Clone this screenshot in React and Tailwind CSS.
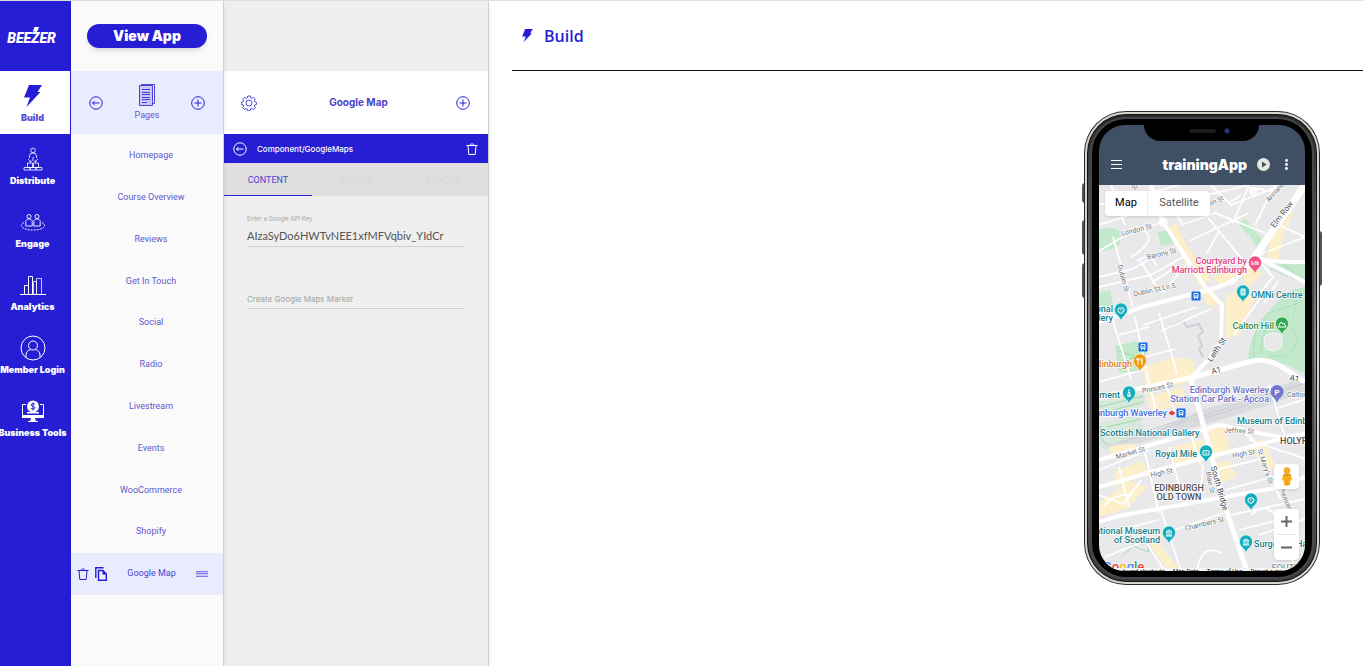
import React, { useState } from 'react';
import clsx from 'clsx';

function Bolt({ className }) {
  return (
    <svg className={className} viewBox="0 0 18 22" fill="currentColor" aria-hidden="true">
      <path d="M5 0H18L13.5 7H16.5L2.5 22L6 12.5H0Z" />
    </svg>
  );
}

function DistributeIcon() {
  return (
    <svg className="w-5 h-6" viewBox="0 0 20 24" fill="none" stroke="currentColor" strokeWidth="0.8">
      <circle cx="10" cy="3.5" r="2.3" />
      <path d="M6.5 11V9a3.5 3 0 0 1 7 0v2M10 10v4M5 12l3 3M15 12l-3 3M8 13.5v1.5H6.5M12 13.5v1.5h1.5" />
      <path d="M4.5 16h5v4.5h-5zM10.5 16h5v4.5h-5zM1 20.5h6v2.5H1zM7 20.5h6v2.5H7zM13 20.5h6v2.5h-6z" />
    </svg>
  );
}

function EngageIcon() {
  return (
    <svg className="w-[26px] h-5" viewBox="0 0 26 20" fill="none" stroke="currentColor" strokeWidth="0.9">
      <circle cx="9" cy="4.5" r="2" />
      <circle cx="17" cy="4.5" r="2" />
      <path d="M5.8 14V9.5C5.8 8 7.2 7 9 7s3.2 1 3.2 2.5V14zM13.8 14V9.5C13.8 8 15.2 7 17 7s3.2 1 3.2 2.5V14z" />
      <path strokeDasharray="2 1" d="M4 10.5C-1 13 1 18 13 18s14-5 9-7.5" />
    </svg>
  );
}

function AnalyticsIcon() {
  return (
    <svg className="w-[26px] h-5" viewBox="0 0 26 20" fill="none" stroke="currentColor">
      <path d="M0 19.5H26M4.5 19V10.5H8.5V19M8.5 19V1.5H12.5V19" />
      <path strokeOpacity="0.75" d="M13.5 19V6.5H16.5V19M16.5 19V3.5H21.5V19" />
    </svg>
  );
}

function MemberIcon() {
  return (
    <svg className="w-[26px] h-[26px]" viewBox="0 0 26 26" fill="none" stroke="currentColor">
      <circle cx="13" cy="13" r="12" />
      <circle cx="13" cy="10.5" r="4.5" />
      <path d="M6 22.5V20c0-3 2-5 4.5-5.3M20 22.5V20c0-3-2-5-4.5-5.3" />
    </svg>
  );
}

function ToolsIcon() {
  return (
    <svg className="w-6 h-[22px]" viewBox="0 0 24 22" fill="none" stroke="currentColor">
      <path d="M5 4.5H1.5V16M19 4.5h3.5V16" />
      <path fill="currentColor" stroke="none" d="M1 15h22v3H1zM10 18h4l1 3h2v1H7v-1h2z" />
      <circle cx="12" cy="6.5" r="6" fill="currentColor" stroke="none" />
      <path fill="currentColor" stroke="none" d="M6 12h12v1.500H6z" />
      <path stroke="#261ed4" d="M14 4.500c-.5-1-3.800-1.200-3.800.5 0 1.800 3.800 1 3.800 2.800 0 1.700-3.500 1.500-4 .3M12 2.500v8" />
    </svg>
  );
}

function PlusCircle() {
  return (
    <svg className="w-[14px] h-[14px]" viewBox="0 0 14 14" fill="none" stroke="currentColor">
      <circle cx="7" cy="7" r="6.3" />
      <path d="M7 3.500v7M3.500 7h7" />
    </svg>
  );
}

function BackCircle() {
  return (
    <svg className="w-[14px] h-[14px]" viewBox="0 0 14 14" fill="none" stroke="currentColor">
      <circle cx="7" cy="7" r="6.200" />
      <path d="M10.500 7h-7M5.500 5L3.500 7l2 2" />
    </svg>
  );
}

function TrashIcon() {
  return (
    <svg className="w-3 h-3" viewBox="0 0 12 12" fill="none" stroke="currentColor">
      <path d="M.5 2.500h11M4 2.500C4 .3 8 .3 8 2.500M2 2.500l.8 9h6.400l.8-9" />
    </svg>
  );
}

function CopyIcon() {
  return (
    <svg className="w-3 h-[14px]" viewBox="0 0 12 14" fill="none" stroke="currentColor" strokeWidth="1.4">
      <path d="M.8 11V.8H8.500M3.500 3.500H8L11.300 7v6.200H3.500z" />
      <path fill="currentColor" stroke="none" d="M7.500 3v4.500H12z" />
    </svg>
  );
}

function PagesIcon() {
  return (
    <svg className="w-4 h-[22px]" viewBox="0 0 16 22" fill="none" stroke="currentColor">
      <path strokeOpacity="0.8" d="M2.500 1.500V.5h13v19h-1.500" />
      <path fill="#c9c8f6" strokeOpacity="0.8" d="M.5 1.500h13v20H.5z" />
      <path strokeOpacity="0.8" d="M3 5.500h8M3 8.500h8M3 10.500h8M3 13.500h8M3 15.500h8M3 18.500h5" />
    </svg>
  );
}

function GearIcon() {
  return (
    <svg className="w-4 h-4" viewBox="0 0 24 24" fill="none" stroke="currentColor" strokeWidth="1.2">
      <circle cx="12" cy="12" r="4.5" />
      <path d="M10 1.500h4l.7 2.800 1.600.6 2.500-1.500 2.700 2.700-1.400 2.500.7 1.700 2.700.7v3l-2.700.8-.7 1.700 1.400 2.500-2.700 2.700-2.500-1.500-1.600.7-.7 2.700h-4l-.7-2.700-1.700-.7-2.500 1.500-2.700-2.700 1.500-2.500-.7-1.700-2.700-.8v-3l2.700-.7.7-1.700-1.500-2.500 2.700-2.700 2.500 1.500 1.700-.6z" />
    </svg>
  );
}

const NAV = [
  { label: 'Build', icon: <Bolt className="w-[18px] h-[22px]" /> },
  { label: 'Distribute', icon: <DistributeIcon /> },
  { label: 'Engage', icon: <EngageIcon /> },
  { label: 'Analytics', icon: <AnalyticsIcon /> },
  { label: 'Member Login', icon: <MemberIcon /> },
  { label: 'Business Tools', icon: <ToolsIcon /> },
];

const PAGES = [
  'Homepage', 'Course Overview', 'Reviews', 'Get In Touch', 'Social',
  'Radio', 'Livestream', 'Events', 'WooCommerce', 'Shopify',
];

const TABS = ['CONTENT', 'DESIGN', 'LAYOUT'];

function Sidebar() {
  return (
    <nav className="w-[71px] shrink-0 overflow-hidden bg-[#261ed4] text-white">
      <div className="relative flex h-[70px] items-center justify-center pr-2 pt-1">
        <span className="text-[14px] font-black italic font-[Roboto,sans-serif]">BEEZER</span>
        <Bolt className="absolute left-8 top-[26px] w-2 h-2" />
      </div>
      {NAV.map((item, i) => (
        <a
          key={item.label}
          href="#"
          className={clsx(
            'flex h-[63px] w-[70px] flex-col items-center pr-[5px] text-[9px] font-black',
            i === 0 && 'bg-white text-[#261ed4]'
          )}
        >
          <span className="flex h-[26px] mt-3 items-center justify-center">{item.icon}</span>
          <span className={clsx('mt-[3px] whitespace-nowrap leading-3', i === 0 && 'text-[#5750cf]')}>{item.label}</span>
        </a>
      ))}
    </nav>
  );
}

function PagesPanel() {
  return (
    <section className="z-10 w-[153px] shrink-0 border-r border-[#cfcfcf] bg-[#fafafa] text-[9px] text-[#5e59cf] shadow-md font-[Roboto,sans-serif]">
      <div className="flex h-[70px] items-center justify-center">
        <button className="h-6 w-[120px] rounded-full bg-[#261ed4] text-[14px] leading-6 font-black text-white shadow-md font-[Inter,sans-serif]">
          View App
        </button>
      </div>
      <div className="flex h-[63px] items-center justify-between bg-[#e9ecff] px-[18px] text-[#261ed4]">
        <button aria-label="Back"><BackCircle /></button>
        <div className="flex flex-col items-center">
          <PagesIcon />
          <span className="mt-[3px] leading-3 text-[#5e59cf]">Pages</span>
        </div>
        <button aria-label="Add page"><PlusCircle /></button>
      </div>
      <ul className="grid h-[419px] pl-2 pt-px text-center">
        {PAGES.map((page) => (
          <li key={page} className="flex items-center justify-center">
            <a href="#">{page}</a>
          </li>
        ))}
      </ul>
      <div className="flex h-[42px] items-center bg-[#e9ecff] pl-[6px] pr-[15px] text-[#261ed4]">
        <button aria-label="Delete page"><TrashIcon /></button>
        <button className="ml-[6px]" aria-label="Duplicate page"><CopyIcon /></button>
        <a href="#" className="flex-1 text-center text-[#4a44cf]">Google Map</a>
        <svg className="w-3 h-[6px] bg-[#c9c8f6]" viewBox="0 0 12 6" stroke="#7f7ae4" aria-hidden="true">
          <path d="M0 .5h12M0 2.500h12M0 5.500h12" />
        </svg>
      </div>
    </section>
  );
}

function EditorPanel() {
  const [apiKey, setApiKey] = useState('AIzaSyDo6HWTvNEE1xfMFVqbiv_YIdCr');
  const [tab, setTab] = useState('CONTENT');

  return (
    <section className="w-[265px] shrink-0 border-r border-[#cfcfcf] bg-[#efefef] shadow-md">
      <div className="mt-[70px] flex h-[63px] items-center justify-between bg-white pl-[17px] pr-[18px] text-[#261ed4]">
        <button aria-label="Settings"><GearIcon /></button>
        <h2 className="pl-1 text-[10px] font-bold text-[#4a44cf]">Google Map</h2>
        <button aria-label="Add component"><PlusCircle /></button>
      </div>
      <div className="flex h-[29px] items-center bg-[#261ed4] pl-[9px] pr-[10px] text-white">
        <button aria-label="Back to components"><BackCircle /></button>
        <span className="flex-1 pl-[10px] text-[8px] font-medium">Component/GoogleMaps</span>
        <button aria-label="Delete component"><TrashIcon /></button>
      </div>
      <div className="grid h-[33px] grid-cols-3 bg-[#e0dfde]">
        {TABS.map((name) => (
          <button
            key={name}
            onClick={() => setTab(name)}
            className={clsx(
              'border-b pt-[3px] text-[9px] font-[Roboto,sans-serif]',
              tab === name ? 'border-[#261ed4] text-[#4a44cf]' : 'border-transparent text-[#d6d6d6]'
            )}
          >
            {name}
          </button>
        ))}
      </div>
      <div className="px-[23px] pt-[18px]">
        <label htmlFor="api-key" className="block text-[6px] leading-[10px] text-[#a3a3a3]">Enter a Google API Key</label>
        <input
          id="api-key"
          value={apiKey}
          onChange={(e) => setApiKey(e.target.value)}
          className="block h-[23px] w-full border-b border-[#cfcfcf] bg-transparent pr-[15px] text-[11px] text-[#555] outline-none font-[Lato,sans-serif]"
        />
        <input
          aria-label="Create Google Maps Marker"
          placeholder="Create Google Maps Marker"
          className="mt-[42px] block h-5 w-full border-b border-[#cfcfcf] bg-transparent text-[8px] outline-none placeholder:text-[#a3a3a3]"
        />
      </div>
    </section>
  );
}

const TEAL = '#12808c';

// x, y is the baseline anchor, r the rotation in degrees
const STREETS = [
  { t: 'London St', x: 38, y: 47, r: -14 },
  { t: 'Barony St', x: 63, y: 71, r: -14 },
  { t: 'Dublin St', x: 22, y: 94, r: 75 },
  { t: 'Dublin St Ln S', x: 56, y: 107, r: -12 },
  { t: 'London St', x: 111, y: 21, r: -24 },
  { t: 'Annandale', x: 181, y: 5, r: -48 },
  { t: 'St', x: 34, y: 3, r: 50 },
  { t: 'Princes St', x: 59, y: 205, r: -13 },
  { t: 'Market St', x: 32, y: 270, r: -16 },
  { t: 'Jeffrey St', x: 140, y: 248, r: 2 },
  { t: 'High St', x: 145, y: 271, r: -10 },
  { t: 'High St', x: 63, y: 290, r: -12 },
  { t: "St Mary's St", x: 164, y: 282, r: 72 },
  { t: 'Blair St', x: 109, y: 298, r: 78 },
  { t: 'Chambers St', x: 106, y: 341, r: -14 },
  { t: 'Pleasance', x: 186, y: 318, r: 68 },
  { t: 'Calton', x: 198, y: 212, r: 0 },
];

const PLACES = [
  { t: 'Courtyard by', x: 148, y: 79, c: '#e0407b', a: 'end' },
  { t: 'Marriott Edinburgh', x: 148, y: 88, c: '#e0407b', a: 'end' },
  { t: 'OMNi Centre', x: 152, y: 113, c: TEAL, a: 'start' },
  { t: 'Calton Hill', x: 175, y: 144, c: '#2c8a47', a: 'end' },
  { t: 'National', x: 14, y: 127, c: TEAL, a: 'end' },
  { t: 'Gallery', x: 14, y: 136, c: TEAL, a: 'end' },
  { t: 'Edinburgh', x: 33, y: 182, c: '#e07b12', a: 'end' },
  { t: 'Monument', x: 21, y: 213, c: TEAL, a: 'end' },
  { t: 'Edinburgh Waverley', x: 170, y: 208, c: '#6a70c4', a: 'end' },
  { t: 'Station Car Park - Apcoa', x: 170, y: 217, c: '#6a70c4', a: 'end' },
  { t: 'Edinburgh Waverley', x: 68, y: 231, c: '#3f6fe0', a: 'end' },
  { t: 'Museum of Edinburgh', x: 138, y: 239, c: TEAL, a: 'start' },
  { t: 'Scottish National Gallery', x: 1, y: 251, c: TEAL, a: 'start' },
  { t: 'Royal Mile', x: 98, y: 272, c: TEAL, a: 'end' },
  { t: 'National Museum', x: 61, y: 349, c: TEAL, a: 'end' },
  { t: 'of Scotland', x: 61, y: 358, c: TEAL, a: 'end' },
  { t: "Surgeons' Halls", x: 155, y: 362, c: TEAL, a: 'start' },
];

const PINS = [
  { x: 156, y: 78, c: '#f0528a', g: 'M-3-2v4M-3 1h6v1M3 1V-1H-1' },
  { x: 144, y: 107, c: '#12aebd', g: 'M-2-3h4v6h-4zM-1-2h2v4h-2z' },
  { x: 183, y: 139, c: '#34a853', g: 'M-4 3l3-5 2 2 1-1 2 4z' },
  { x: 22, y: 125, c: '#12aebd', g: 'M-2-2a3 3 0 1 0 4 0zM-1 0h1M1 1h1' },
  { x: 41, y: 176, c: '#f29a0c', g: 'M-2-3v7M-3-3v2h2v-2M2 4v-7c-2 1-1 3 0 4' },
  { x: 30, y: 208, c: '#12aebd', g: 'M0-4v3l-1 1v3h2V0l-1-1M-2 3h4' },
  { x: 107, y: 267, c: '#12aebd', g: 'M-3-1h2l1-1 1 1h2v4h-6zM-1 1h2' },
  { x: 152, y: 315, c: '#12aebd', g: 'M-2-2a3 3 0 1 0 4 0zM-1 0h1M1 1h1' },
  { x: 70, y: 348, c: '#12aebd', g: 'M-3-1l3-2 3 2zM-2 0v3M0 0v3M2 0v3M-3 3h6' },
  { x: 147, y: 357, c: '#12aebd', g: 'M-3-1l3-2 3 2zM-2 0v3M0 0v3M2 0v3M-3 3h6' },
];

const STATIONS = [[97, 111], [44, 162], [82, 228]];

function CityMap() {
  return (
    <svg className="block w-full" viewBox="0 0 206 386" fontFamily="Roboto, sans-serif" role="img" aria-label="Map of Edinburgh">
      <rect width="206" height="386" fill="#e9e9eb" />

      {/* parks */}
      <g fill="#c3e9cc">
        <path d="M0 44L14 43Q23 46 22 54Q21 63 10 65L0 66zM58 47l11-2 6 14-13 2zM139 38l7-5 9 12-6 5zM150 50l6-5 7 10-5 7zM0 107l11-2 3 16-14 4zM24 26l8 4-5 4-6-5z" />
        <path d="M149 174L152 155 162 136 176 119 190 106 206 102V189L190 181 168 174zM167 77H206V99zM16 161L37 156 48 167 42 186 20 188z" />
        <path d="M0 216l45-8 1 12-46 13zM0 238l40-8 6 16L8 266 0 260z" opacity="0.5" />
      </g>
      <g fill="none" stroke="#8fd3a0" strokeWidth="0.8">
        <path d="M18 180L48 166M20 166l26 9M0 222l44-11M0 229l44-12M2 241q-4 20 18 21M8 242l34-8M28 352l6-12M30 345l4 16 16 6-4-16M34 361l-10 9" />
        <path strokeDasharray="2 1.5" d="M155 172q-2-40 20-46t28-10M162 168q0-28 16-30t20 18q-6 20-28 14M198 112l-4 20M171 84l30 12M185 79l15 14" />
      </g>
      <path d="M165 152q8-7 18-2v12q-9 7-17 1z" fill="#e8e8ea" stroke="#fff" strokeDasharray="2 1" />

      {/* commercial blocks */}
      <g fill="#fcefc9">
        <path d="M70 42l8-3 10 22 16 22 8 12-11 6-18-28zM172 50l14-22 9-3-10 24-6 26-11-3zM143 84l14-4 7 10-17 13zM113 92l22-7 8 4-20 12zM128 110l23-8 5 12-16 36-13 3-1-22zM102 107l12-3 6 12-4 7-9-5z" />
        <path d="M44 182l30-9 20 1 3 20-50 16zM49 212l34-10 3 8-35 12zM52 222l33-9 1 5-32 9zM104 243l20-6 8 30-18 8zM74 262l30-8 5 17-33 8zM16 286l28-10 5 12-32 14zM0 318l30-22 18 6-20 22-28 8zM114 280l16-5 7 16-15 8zM150 260l14-6 12 26-8 8zM54 350l13 18 14 16h-13l-16-22zM10 262l20-7 8 8-25 9z" />
      </g>

      {/* railway */}
      <path d="M0 262L60 244 100 226 170 204 206 192V206L170 220 104 240 40 258z" fill="#dadbdf" />
      <path d="M20 258L100 232 206 198M30 252l70-23M96 236l80-24" stroke="#cbcdd2" fill="none" />
      <path d="M74 140l10-4 4 6 12-3 4 8-5 4 4 9-3 4 4 8" fill="none" stroke="#cfd1d6" strokeWidth="2" />

      {/* minor roads */}
      <g fill="none" stroke="#fff" strokeWidth="1.8">
        <path d="M0 20L62 5 112-10M0 40L64 20 150 0M12 0l14 40M26 52q8-16 20-6t-14 26M0 92L34 84 64 66M14 52l20 70M40 74l22 34M64 37L30 48 0 66M38 76q14-10 20 6M64 108l26-32M74 84l-22 14M0 102l52-12 32-18" />
        <path d="M82 40l34-12 50 20M90 56l60-28M100 22l20 24-12 22M120 46l28 34M150 0l-16 38M112 0l20 20 46-18M130 18l12-8M152 8q6-8 14-2M176 0l-20 40M62 6l22 34M170 66l36-14M180 40l26 12M132 100l34-34M158 112l16-20-12-14M165 118l14-22M135 150l30-42" />
        <path d="M12 130l20 64M36 132l14 66M60 128l18 60M44 140l54-18M20 150l30-8M62 146l50-22M46 172l30-8M50 198l8 32M66 196l10 32M0 197l44-12M170 200l18 58M176 224l30-10" />
        <path d="M0 285l50-20M20 282l10 40M46 268l14 60M70 262l14 54M92 250l10 30M104 280l-3 36M0 350l60-15M62 325l20 61M76 345l48-17M98 386q4-28 24-18M130 245q24 2 30 20l22 50M150 255l60 20M116 285l50-12M126 305l52-14M132 330l74-16M152 330q16-16 28 6M160 350l46-16M140 345l36-9 20 46M6 372l40-16 20 30M0 310l24 9 18-24M4 322q14-16 30-11" />
      </g>

      {/* main roads */}
      <g fill="none" stroke="#fff" strokeLinejoin="round">
        <path strokeWidth="4" d="M0 137L43 122 116 103Q139 97 156 72M64 37L106 102 123 120 122 155 109 175 93 192M93 192L0 212M156 72Q170 78 206 77M162 74L206 97M64 37L52 0" />
        <path strokeWidth="7" d="M154 74L206 0" />
        <path strokeWidth="5" d="M92 193L149 177Q168 172 183 182T206 197M91 192L103 235 126 322 148 386" />
        <path strokeWidth="4" d="M0 337Q20 330 36 328L109 315 176 303 206 292M0 275L93 248 120 240 206 257M0 302L59 285 109 272 150 262 206 248" />
        <circle cx="64" cy="37" r="3" strokeWidth="3" />
        <circle cx="154" cy="6" r="3" strokeWidth="2" />
      </g>

      {/* labels */}
      <g stroke="#fff" strokeWidth="1.5" strokeLinejoin="round" paintOrder="stroke">
        <g fontSize="7" fill="#6b7076" textAnchor="middle">
          {STREETS.map((s, i) => (
            <text key={i} x={s.x} y={s.y} transform={`rotate(${s.r} ${s.x} ${s.y})`}>{s.t}</text>
          ))}
        </g>
        <g fontSize="8" fill="#45494f" textAnchor="middle">
          <text x="185" y="31" transform="rotate(-52 185 31)">Elm Row</text>
          <text x="120" y="166" transform="rotate(-56 120 166)">Leith St</text>
          <text x="118" y="188" transform="rotate(-16 118 188)">A1</text>
          <text x="195" y="196" transform="rotate(12 195 196)">A1</text>
          <text x="118" y="304" transform="rotate(74 118 304)">South Bridge</text>
        </g>
        <g fontSize="9" fontWeight="500">
          {PLACES.map((p) => (
            <text key={p.t + p.y} x={p.x} y={p.y} fill={p.c} textAnchor={p.a}>{p.t}</text>
          ))}
        </g>
        <g fontSize="9" fontWeight="500" fill="#4b5057">
          <text x="80" y="306" textAnchor="middle">EDINBURGH</text>
          <text x="80" y="315" textAnchor="middle">OLD TOWN</text>
          <text x="181" y="259">HOLYROOD</text>
          <text x="172" y="386" fill="#8b9096">SOUTHSIDE</text>
        </g>
      </g>

      {STATIONS.map(([x, y]) => (
        <g key={x} transform={`translate(${x} ${y})`}>
          <rect x="-4.5" y="-4.5" width="9" height="9" rx="1" fill="#1a6fe0" />
          <path d="M-2-2.5h4v4h-4zM-2 0h4M-2 3l1-1M2 3L1 2" fill="none" stroke="#fff" strokeWidth="0.9" />
        </g>
      ))}
      <path d="M70 228l3-2 3 2-3 2z" fill="#ec3b43" stroke="#ec3b43" />

      {PINS.map((p) => (
        <g key={`${p.x}-${p.y}`} transform={`translate(${p.x} ${p.y})`}>
          <path d="M0 11C-1 6-6.5 5-6.5-.5a6.5 6.5 0 0 1 13 0C6.5 5 1 6 0 11z" fill={p.c} stroke="#fff" strokeWidth="0.5" />
          <path d={p.g} fill="none" stroke="#fff" />
        </g>
      ))}
      <g transform="translate(178 207)">
        <path d="M0 11C-1 6-6.5 5-6.5-.5a6.5 6.5 0 0 1 13 0C6.5 5 1 6 0 11z" fill="#7177cf" />
        <text y="3" fontSize="8" fontWeight="700" fill="#fff" textAnchor="middle">P</text>
      </g>

      <text x="4" y="386" fontSize="13" fontWeight="500" stroke="#fff" strokeWidth="1" paintOrder="stroke">
        <tspan fill="#4285f4">G</tspan><tspan fill="#ea4335">o</tspan><tspan fill="#fbbc05">o</tspan><tspan fill="#4285f4">g</tspan><tspan fill="#34a853">l</tspan><tspan fill="#ea4335">e</tspan>
      </text>
    </svg>
  );
}

function PhoneScreen() {
  return (
    <div className="relative h-[446px] overflow-hidden rounded-[26px] bg-[#3f5065] font-[Roboto,sans-serif]">
      {/* notch */}
      <div className="absolute left-[45px] top-0 flex h-4 w-[115px] items-center justify-center gap-2 rounded-b-2xl bg-black pb-1">
        <span className="ml-4 h-1 w-[27px] rounded-full bg-[#1c1c1e]" />
        <span className="h-[6px] w-[6px] rounded-full border border-[#1a2130] bg-[#1b3c86]" />
      </div>

      <header className="flex h-[60px] items-center pl-3 pr-[17px] pt-[19px] text-white">
        <button aria-label="Menu">
          <svg className="w-[11px] h-[9px]" viewBox="0 0 11 9" stroke="currentColor">
            <path d="M0 .5h11M0 4.500h11M0 8.500h11" />
          </svg>
        </button>
        <h3 className="flex-1 text-right text-[14px] leading-5 font-black font-[Inter,sans-serif]">trainingApp</h3>
        <button className="ml-[10px]" aria-label="Play">
          <svg className="w-[13px] h-[13px]" viewBox="0 0 13 13">
            <circle cx="6.5" cy="6.5" r="6.5" fill="#e9e7df" />
            <path d="M5 3.500l4.500 3L5 9.500z" fill="#3f5065" />
          </svg>
        </button>
        <button className="ml-[15px]" aria-label="More">
          <svg className="w-[3px] h-[11px]" viewBox="0 0 3 11" fill="currentColor">
            <circle cx="1.5" cy="1.5" r="1.4" />
            <circle cx="1.5" cy="5.5" r="1.4" />
            <circle cx="1.5" cy="9.5" r="1.4" />
          </svg>
        </button>
      </header>

      <CityMap />

      {/* map controls */}
      <div className="absolute left-[6px] top-[66px] flex h-[25px] rounded-sm bg-white text-[11px] shadow-sm">
        <button className="w-[43px] border-r border-[#f0f0f0] text-black">Map</button>
        <button className="w-[62px] text-[#565656]">Satellite</button>
      </div>
      <button className="absolute right-[6px] top-[339px] flex h-[25px] w-[25px] items-center justify-center rounded-sm bg-white shadow-sm" aria-label="Street View">
        <svg className="w-3 h-[19px]" viewBox="0 0 12 19">
          <path d="M2 7.500Q6 5 10 7.500L11 13l-1.500.5L9 18.500H3L2.500 13.500 1 13z" fill="#f5b01e" />
          <circle cx="6" cy="3.5" r="3" fill="#f5b01e" stroke="#d48c14" strokeWidth="0.5" />
          <path d="M3 7.500q3 2 6 0M6 13v5" stroke="#d48c14" fill="none" />
        </svg>
      </button>
      <div className="absolute right-[6px] top-[384px] flex w-[25px] flex-col items-center rounded-sm bg-white text-[#666] shadow-sm">
        <button className="flex h-[25px] items-center" aria-label="Zoom in">
          <svg className="w-[11px] h-[11px]" viewBox="0 0 11 11" stroke="currentColor" strokeWidth="2">
            <path d="M5.500 0v11M0 5.500h11" />
          </svg>
        </button>
        <span className="h-px w-[19px] bg-[#e6e6e6]" />
        <button className="flex h-[25px] items-center" aria-label="Zoom out">
          <svg className="w-[11px] h-[11px]" viewBox="0 0 11 11" stroke="currentColor" strokeWidth="2">
            <path d="M0 5.500h11" />
          </svg>
        </button>
      </div>
      <div className="absolute bottom-0 left-[14px] flex h-[3px] gap-2 overflow-hidden whitespace-nowrap bg-[#f5f5f5] text-[6px] leading-[6px] text-black">
        <span>Keyboard shortcuts</span>
        <span>Map Data</span>
        <span>Terms of Use</span>
        <span>Report a map error</span>
      </div>
    </div>
  );
}

function Phone() {
  return (
    <div className="relative w-[236px]">
      <span className="absolute -left-[2px] top-[72px] h-5 w-[3px] rounded-l-sm bg-[#55554f]" />
      <span className="absolute -left-[2px] top-[109px] h-[35px] w-[3px] rounded-l-sm bg-[#55554f]" />
      <span className="absolute -left-[2px] top-[152px] h-[35px] w-[3px] rounded-l-sm bg-[#55554f]" />
      <span className="absolute -right-[2px] top-[120px] h-[55px] w-[3px] rounded-r-sm bg-[#55554f]" />
      <div className="relative rounded-[42px] bg-[#2b2b2b] p-px">
        <div className="rounded-[41px] bg-[#d6d7cf] p-[2px]">
          <div className="rounded-[39px] bg-[#111] p-px">
            <div className="rounded-[38px] bg-linear-to-b from-[#2a2a2b] via-[#8b8b8e] to-[#3a3a3b] p-[2px]">
              <div className="rounded-[36px] bg-[#48484a] p-[2px]">
                <div className="rounded-[34px] bg-black px-[7px] py-[6px]">
                  <PhoneScreen />
                </div>
              </div>
            </div>
          </div>
        </div>
      </div>
    </div>
  );
}

export default function App() {
  return (
    <div className="flex min-h-screen overflow-hidden border-t border-[#dedede] bg-white font-[Inter,sans-serif]">
      <Sidebar />
      <PagesPanel />
      <EditorPanel />
      <main className="min-w-0 flex-1 pl-[23px]">
        <header className="flex h-[70px] items-center gap-[11px] border-b border-[#111] pl-[10px] text-[#261ed4]">
          <Bolt className="w-[11px] h-[13px]" />
          <h1 className="text-[16px] font-semibold font-[Open_Sans,sans-serif]">Build</h1>
        </header>
        <div className="flex justify-end pr-[43px] pt-10">
          <Phone />
        </div>
      </main>
    </div>
  );
}
